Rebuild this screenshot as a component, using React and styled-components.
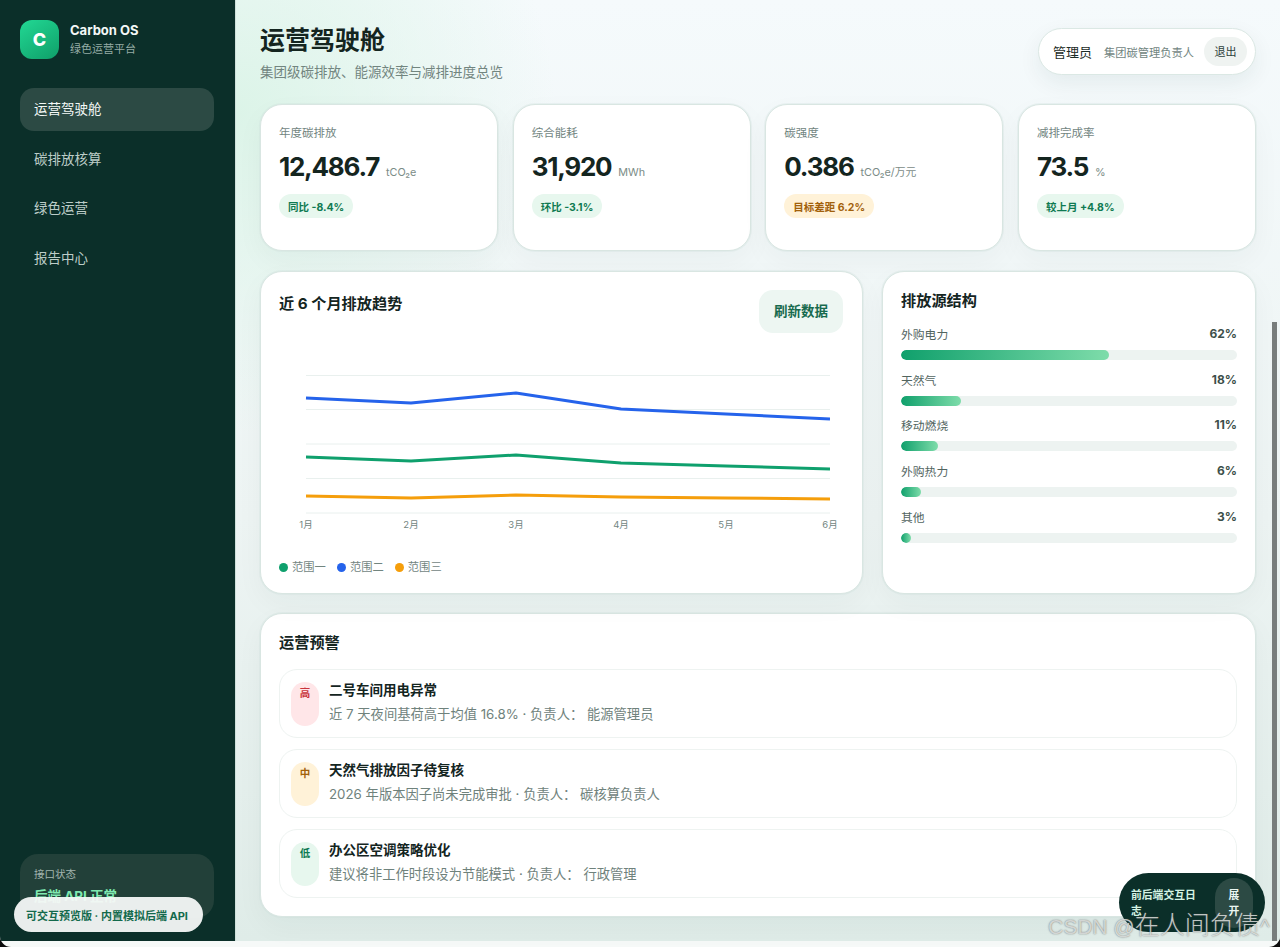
import React from "react";
import styled, { createGlobalStyle } from "styled-components";

const Global = createGlobalStyle`
  html, body { margin: 0; padding: 0; background: #0c0c0c; }
  body { font-family: Inter, "Noto Sans CJK SC", "Noto Sans", sans-serif; color: #13241f; }
  * { box-sizing: border-box; }
`;

const Frame = styled.div`
  position: relative;
  width: 1280px;
  height: 947px;
  overflow: hidden;
  background: #f6f9f8;
  border-radius: 0 0 11px 11px;
`;
const Shell = styled.div`
  display: flex;
  height: 941px;
`;
const Sidebar = styled.aside`
  width: 236px;
  flex: none;
  display: flex;
  flex-direction: column;
  padding: 20px 21px 23px 20px;
  background: #0b2f29;
  border-right: 1px solid #cfe0da;
`;
const Brand = styled.div`
  display: flex;
  align-items: center;
  gap: 11px;
  margin-bottom: 29px;
`;
const Logo = styled.div`
  width: 39px;
  height: 39px;
  border-radius: 12px;
  display: flex;
  align-items: center;
  justify-content: center;
  font-size: 18px;
  font-weight: 800;
  color: #fff;
  background: linear-gradient(145deg, #22d894, #0f9f69);
`;
const BrandName = styled.div`
  font-size: 13px;
  font-weight: 700;
  line-height: 18px;
  color: #f3f8f6;
`;
const BrandSub = styled.div`
  margin-top: 1px;
  font-size: 11px;
  line-height: 18px;
  color: #95aca5;
`;
const Nav = styled.nav`
  display: flex;
  flex-direction: column;
  gap: 6.5px;
`;
const NavItem = styled.div`
  height: 43px;
  padding: 0 14px 3px;
  display: flex;
  align-items: center;
  border-radius: 14px;
  font-size: 13.5px;
  color: ${(p) => (p.$active ? "#f4f9f7" : "#bdcdc8")};
  background: ${(p) => (p.$active ? "#2c4a44" : "transparent")};
`;
const Status = styled.div`
  margin-top: auto;
  height: 64px;
  padding: 14px 14px;
  border-radius: 18px;
  background: #224039;
`;
const StatusLabel = styled.div`
  font-size: 10.5px;
  line-height: 14px;
  color: #a2b5af;
`;
const StatusValue = styled.div`
  margin-top: 5px;
  font-size: 13.5px;
  font-weight: 700;
  line-height: 18px;
  color: #7fe9b0;
`;
const Main = styled.main`
  flex: 1;
  min-width: 0;
  padding: 25px 24px 0;
  background:
    radial-gradient(circle at 0 12%, #dcf4e8 0, rgba(220, 244, 232, 0) 320px),
    linear-gradient(180deg, #f5fafc 0%, #edf4f3 55%, #dfece8 100%);
`;
const Header = styled.header`
  display: flex;
  justify-content: space-between;
  align-items: flex-start;
  height: 56px;
  margin-bottom: 23px;
`;
const Title = styled.h1`
  margin: 0;
  font-size: 25px;
  line-height: 30px;
  font-weight: 700;
  color: #14251f;
`;
const Subtitle = styled.p`
  margin: 8px 0 0;
  font-size: 13.5px;
  line-height: 18px;
  color: #72857f;
`;
const UserPill = styled.div`
  margin-top: 3px;
  height: 47px;
  width: 218px;
  padding: 0 8px 0 14px;
  display: flex;
  align-items: center;
  border: 1px solid #dbe8e4;
  border-radius: 24px;
  background: #fff;
  box-shadow: 0 8px 22px rgba(20, 60, 50, 0.07);
`;
const UserName = styled.span`
  flex: none;
  font-size: 13px;
  color: #1c2c27;
  white-space: nowrap;
  margin-right: 12px;
`;
const UserRole = styled.span`
  font-size: 11.25px;
  color: #72857f;
  white-space: nowrap;
  margin-right: 10px;
`;
const Logout = styled.button`
  width: 43px;
  height: 29px;
  flex: none;
  padding: 0 0 1px;
  border: 0;
  border-radius: 15px;
  background: #eff3f1;
  font: inherit;
  font-size: 11px;
  color: #2d413b;
`;
const Card = styled.section`
  background: #fff;
  border: 1px solid #d9e6e2;
  border-radius: 22px;
  box-shadow: 0 0 0 1px rgba(200, 220, 214, 0.25), 0 10px 28px rgba(20, 60, 50, 0.04);
`;
const Stats = styled.div`
  display: grid;
  grid-template-columns: repeat(4, 1fr);
  gap: 14.67px;
  margin-bottom: 20px;
`;
const StatCard = styled(Card)`
  height: 147px;
  padding: 20px 18px;
`;
const StatLabel = styled.div`
  font-size: 11.5px;
  line-height: 16px;
  color: #72857f;
`;
const StatValueRow = styled.div`
  display: flex;
  align-items: baseline;
  gap: 7px;
  margin-top: 8px;
  height: 36px;
`;
const StatValue = styled.span`
  font-size: 26px;
  line-height: 36px;
  font-weight: 700;
  letter-spacing: -1.25px;
  color: #14251f;
`;
const StatUnit = styled.span`
  font-size: 10.8px;
  color: #7b8c87;
`;
const Badge = styled.span`
  display: inline-flex;
  align-items: center;
  height: 24px;
  margin-top: 9px;
  padding: 0 9px;
  border-radius: 12px;
  font-size: 10.5px;
  font-weight: 700;
  color: ${(p) => (p.$warn ? "#a2610b" : "#0f7a52")};
  background: ${(p) => (p.$warn ? "#fff2d8" : "#e7f7ee")};
`;
const ChartRow = styled.div`
  display: grid;
  grid-template-columns: 1.612fr 1fr;
  gap: 19px;
  margin-bottom: 19px;
`;
const ChartCard = styled(Card)`
  height: 323px;
  padding: 18px 18px 0;
`;
const ChartHead = styled.div`
  display: flex;
  justify-content: space-between;
  align-items: flex-start;
  height: 43px;
`;
const CardTitle = styled.h2`
  margin: 0;
  font-size: 15.2px;
  line-height: 20px;
  font-weight: 700;
  color: #14251f;
`;
const ChartTitle = styled(CardTitle)`
  margin-top: 4px;
`;
const Refresh = styled.button`
  width: 84px;
  height: 43px;
  margin-right: 1px;
  padding: 0 0 3px;
  border: 0;
  border-radius: 14px;
  background: #edf6f2;
  font: inherit;
  font-size: 13.5px;
  font-weight: 700;
  color: #176a4e;
`;
const ChartSvg = styled.svg`
  display: block;
  width: 565px;
  height: 200px;
  margin-top: 12px;
`;
const Legend = styled.div`
  display: flex;
  gap: 11px;
  margin-top: 14px;
`;
const LegendItem = styled.div`
  display: flex;
  align-items: center;
  gap: 4px;
  font-size: 11.3px;
  line-height: 16px;
  color: #72857f;
`;
const Dot = styled.i`
  width: 9px;
  height: 9px;
  border-radius: 50%;
  background: ${(p) => p.$color};
`;
const SourceCard = styled(Card)`
  height: 323px;
  padding: 19px 18px 0;
`;
const Sources = styled.div`
  display: flex;
  flex-direction: column;
  gap: 9.7px;
  margin-top: 13px;
`;
const SourceHead = styled.div`
  display: flex;
  justify-content: space-between;
  align-items: flex-start;
  height: 18px;
  margin-bottom: 8px;
`;
const SourceName = styled.span`
  font-size: 11.8px;
  line-height: 18px;
  margin-top: 2px;
  color: #52655f;
`;
const SourceValue = styled.span`
  font-size: 12px;
  line-height: 16px;
  margin-top: 2px;
  font-weight: 700;
  color: #3c4f49;
`;
const Track = styled.div`
  height: 10px;
  border-radius: 5px;
  background: #edf3f1;
  overflow: hidden;
`;
const Fill = styled.div`
  height: 100%;
  border-radius: 5px;
  background: linear-gradient(90deg, #10a06c, #7edcaa);
`;
const AlertCard = styled(Card)`
  height: 304px;
  padding: 19px 18px 0;
`;
const AlertList = styled.div`
  display: flex;
  flex-direction: column;
  gap: 11px;
  margin-top: 16px;
`;
const AlertItem = styled.div`
  display: flex;
  gap: 10px;
  height: 69px;
  padding: 12px 11px;
  border: 1px solid #eef3f1;
  border-radius: 18px;
`;
const Level = styled.span`
  width: 28px;
  height: 44px;
  flex: none;
  padding-top: 5px;
  text-align: center;
  border-radius: 14px;
  font-size: 10.5px;
  line-height: 14px;
  font-weight: 700;
  color: ${(p) => p.$fg};
  background: ${(p) => p.$bg};
`;
const AlertBody = styled.div`
  margin-top: -1px;
`;
const AlertTitle = styled.div`
  font-size: 13.5px;
  line-height: 18px;
  font-weight: 700;
  color: #14251f;
`;
const AlertDesc = styled.div`
  margin-top: 6px;
  font-size: 13.3px;
  line-height: 18px;
  color: #6f827c;
`;
const PreviewPill = styled.div`
  position: absolute;
  left: 14px;
  top: 897px;
  width: 189px;
  height: 35px;
  padding: 0 12px;
  display: flex;
  align-items: center;
  border-radius: 18px;
  background: rgba(246, 248, 247, 0.95);
  font-size: 11px;
  font-weight: 700;
  color: #136a4c;
  white-space: nowrap;
`;
const LogPill = styled.div`
  position: absolute;
  left: 1119px;
  top: 873px;
  width: 146px;
  height: 59px;
  padding: 9px 12px;
  display: flex;
  align-items: center;
  gap: 12px;
  border-radius: 30px;
  background: #0b2f29;
`;
const LogText = styled.div`
  width: 72px;
  padding-top: 2px;
  font-size: 10.8px;
  line-height: 16px;
  font-weight: 700;
  color: #d5f3e4;
`;
const LogButton = styled.button`
  width: 38px;
  height: 50px;
  flex: none;
  margin-right: -1px;
  padding: 2px 12px 0;
  border: 0;
  border-radius: 19px;
  background: #2c4a44;
  font: inherit;
  font-size: 10.8px;
  line-height: 16px;
  font-weight: 700;
  color: #eaf6f1;
`;
const Watermark = styled.div`
  position: absolute;
  left: 1048px;
  top: 909px;
  font-family: "Liberation Sans", "Noto Sans CJK SC", sans-serif;
  font-size: 25px;
  line-height: 32px;
  font-weight: 300;
  color: rgba(232, 235, 233, 0.8);
  text-shadow: 0 0 1.5px rgba(80, 80, 80, 0.85);
  white-space: nowrap;
`;
const WatermarkLatin = styled.span`
  font-size: 21px;
`;
const Scrollbar = styled.div`
  position: absolute;
  left: 1272px;
  top: 322px;
  width: 5px;
  height: 619px;
  background: #787d7c;
`;

const stats = [
  { label: "年度碳排放", value: "12,486.7", unit: "tCO₂e", badge: "同比 -8.4%" },
  { label: "综合能耗", value: "31,920", unit: "MWh", badge: "环比 -3.1%" },
  { label: "碳强度", value: "0.386", unit: "tCO₂e/万元", badge: "目标差距 6.2%", warn: true },
  { label: "减排完成率", value: "73.5", unit: "%", badge: "较上月 +4.8%" },
];
const sources = [
  ["外购电力", 62],
  ["天然气", 18],
  ["移动燃烧", 11],
  ["外购热力", 6],
  ["其他", 3],
];
const alerts = [
  { level: "高", fg: "#c9343c", bg: "#ffe6e8", title: "二号车间用电异常", desc: "近 7 天夜间基荷高于均值 16.8% · 负责人： 能源管理员" },
  { level: "中", fg: "#a2610b", bg: "#fff2d8", title: "天然气排放因子待复核", desc: "2026 年版本因子尚未完成审批 · 负责人： 碳核算负责人" },
  { level: "低", fg: "#0f7a52", bg: "#e7f7ee", title: "办公区空调策略优化", desc: "建议将非工作时段设为节能模式 · 负责人： 行政管理" },
];
const xs = [27, 132, 237, 342, 447, 551];
const gridYs = [30.5, 64.5, 99, 133.5, 168];
const lines = [
  { color: "#2563eb", ys: [53, 58, 48, 64, 69, 74] },
  { color: "#0fa06d", ys: [112, 116, 110, 118, 121, 124] },
  { color: "#f59e0b", ys: [151, 153, 150, 152, 153, 154] },
];
const months = ["1月", "2月", "3月", "4月", "5月", "6月"];
const legend = [
  ["范围一", "#0fa06d"],
  ["范围二", "#2563eb"],
  ["范围三", "#f59e0b"],
];

export default function App() {
  return (
    <>
      <Global />
      <Frame>
        <Shell>
          <Sidebar>
            <Brand>
              <Logo>C</Logo>
              <div>
                <BrandName>Carbon OS</BrandName>
                <BrandSub>绿色运营平台</BrandSub>
              </div>
            </Brand>
            <Nav>
              <NavItem $active>运营驾驶舱</NavItem>
              <NavItem>碳排放核算</NavItem>
              <NavItem>绿色运营</NavItem>
              <NavItem>报告中心</NavItem>
            </Nav>
            <Status>
              <StatusLabel>接口状态</StatusLabel>
              <StatusValue>后端 API 正常</StatusValue>
            </Status>
          </Sidebar>
          <Main>
            <Header>
              <div>
                <Title>运营驾驶舱</Title>
                <Subtitle>集团级碳排放、能源效率与减排进度总览</Subtitle>
              </div>
              <UserPill>
                <UserName>管理员</UserName>
                <UserRole>集团碳管理负责人</UserRole>
                <Logout>退出</Logout>
              </UserPill>
            </Header>
            <Stats>
              {stats.map((s) => (
                <StatCard key={s.label}>
                  <StatLabel>{s.label}</StatLabel>
                  <StatValueRow>
                    <StatValue>{s.value}</StatValue>
                    <StatUnit>{s.unit}</StatUnit>
                  </StatValueRow>
                  <Badge $warn={s.warn}>{s.badge}</Badge>
                </StatCard>
              ))}
            </Stats>
            <ChartRow>
              <ChartCard>
                <ChartHead>
                  <ChartTitle>近 6 个月排放趋势</ChartTitle>
                  <Refresh>刷新数据</Refresh>
                </ChartHead>
                <ChartSvg viewBox="0 0 565 200">
                  {gridYs.map((y) => (
                    <line key={y} x1="27" x2="551" y1={y} y2={y} stroke="#e9f0ee" strokeWidth="1" />
                  ))}
                  {lines.map((l) => (
                    <polyline
                      key={l.color}
                      fill="none"
                      stroke={l.color}
                      strokeWidth="3"
                      strokeLinejoin="round"
                      points={l.ys.map((y, i) => `${xs[i]},${y}`).join(" ")}
                    />
                  ))}
                  {months.map((m, i) => (
                    <text key={m} x={xs[i]} y="183" textAnchor="middle" fontSize="9.5" fill="#72857f">
                      {m}
                    </text>
                  ))}
                </ChartSvg>
                <Legend>
                  {legend.map(([name, color]) => (
                    <LegendItem key={name}>
                      <Dot $color={color} />
                      {name}
                    </LegendItem>
                  ))}
                </Legend>
              </ChartCard>
              <SourceCard>
                <CardTitle>排放源结构</CardTitle>
                <Sources>
                  {sources.map(([name, pct]) => (
                    <div key={name}>
                      <SourceHead>
                        <SourceName>{name}</SourceName>
                        <SourceValue>{pct}%</SourceValue>
                      </SourceHead>
                      <Track>
                        <Fill style={{ width: `${pct}%` }} />
                      </Track>
                    </div>
                  ))}
                </Sources>
              </SourceCard>
            </ChartRow>
            <AlertCard>
              <CardTitle>运营预警</CardTitle>
              <AlertList>
                {alerts.map((a) => (
                  <AlertItem key={a.title}>
                    <Level $fg={a.fg} $bg={a.bg}>{a.level}</Level>
                    <AlertBody>
                      <AlertTitle>{a.title}</AlertTitle>
                      <AlertDesc>{a.desc}</AlertDesc>
                    </AlertBody>
                  </AlertItem>
                ))}
              </AlertList>
            </AlertCard>
          </Main>
        </Shell>
        <Scrollbar />
        <PreviewPill>可交互预览版 · 内置模拟后端 API</PreviewPill>
        <LogPill>
          <LogText>前后端交互日志</LogText>
          <LogButton>展开</LogButton>
        </LogPill>
        <Watermark>
          <WatermarkLatin>CSDN @</WatermarkLatin>在人间负债<WatermarkLatin>^</WatermarkLatin>
        </Watermark>
      </Frame>
    </>
  );
}
